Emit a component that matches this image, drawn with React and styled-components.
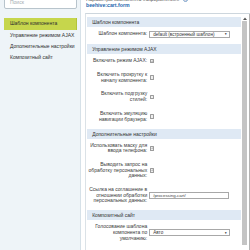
import React from 'react';
import styled, { createGlobalStyle } from 'styled-components';

const Global = createGlobalStyle`
  html, body { margin: 0; padding: 0; background: #fff; }
  body {
    font-family: "Liberation Sans", Arial, sans-serif;
    font-size: 5px;
    color: #333;
    overflow: hidden;
  }
`;

const Page = styled.div`
  display: grid;
  grid-template-columns: 81px 1fr;
  height: 250px;
  overflow: hidden;
`;

const Sidebar = styled.aside`
  background: #eef4f8;
  border-right: 1px solid #d6e1e8;
  padding: 0 3px 0 4px;
`;

const Search = styled.div`
  margin-top: -3px;
  height: 12.3px;
  box-sizing: border-box;
  border: 0.8px solid #b8c4cc;
  border-radius: 2px;
  background: #fff;
  color: #a3abb0;
  padding: 2.2px 0 0 5px;
  line-height: 5px;
`;

const Nav = styled.nav`
  margin-top: 9px;
  display: flex;
  flex-direction: column;
`;

const NavItem = styled.div`
  height: 11.3px;
  line-height: 11.3px;
  padding-left: 6px;
  box-sizing: border-box;
  color: #2f2f2f;
  background: ${p => (p.$active ? '#c6d64c' : 'transparent')};
  border-right: ${p => (p.$active ? '1px solid #b2c43a' : '0')};
`;

const Main = styled.main`
  display: flex;
  flex-direction: column;
  padding-left: 4px;
  min-width: 0;
`;

const TitleRow = styled.div`
  margin-top: -3px;
  padding-left: 1px;
  display: flex;
  align-items: center;
  gap: 4px;
  height: 5px;
  line-height: 5px;
  color: #555;
  white-space: nowrap;
`;

const Help = styled.span`
  width: 5px;
  height: 5px;
  border-radius: 50%;
  border: 0.6px solid #7aa0c8;
  box-sizing: border-box;
  color: #4a78a8;
  font-size: 3.5px;
  line-height: 4px;
  text-align: center;
  font-weight: bold;
`;

const Code = styled.div`
  padding-left: 1px;
  margin-top: 0.5px;
  height: 5px;
  line-height: 5px;
  color: #2366ad;
  font-weight: bold;
  font-size: 5.2px;
`;

const Panel = styled.div`
  margin-top: 5.2px;
  flex: 1;
  display: flex;
  border-top: 0.8px solid #cdd6dd;
  border-left: 0.8px solid #dbe2e7;
  min-height: 0;
`;

const Content = styled.div`
  flex: 1;
  padding: 3px 0 0 1.2px;
  min-width: 0;
`;

const Section = styled.section`
  & + & { margin-top: 2.3px; }
`;

const SectionTitle = styled.div`
  height: 10px;
  line-height: 10px;
  background: #dfe9f4;
  padding-left: 5px;
  color: #333;
`;

const Row = styled.div`
  display: grid;
  grid-template-columns: 60px 1fr;
  column-gap: 2px;
  align-items: center;
  padding: 4px 0;
`;

const Label = styled.div`
  text-align: right;
  line-height: 5.7px;
  white-space: nowrap;
  color: #3a3a3a;
`;

const Box = styled.span`
  display: inline-flex;
  align-items: center;
  justify-content: center;
  width: 4.6px;
  height: 4.6px;
  box-sizing: border-box;
  border: 0.6px solid #9c9c9c;
  border-radius: 0.6px;
  background: #eeeeee;
  margin-left: 0.5px;
`;

const Select = styled.div`
  width: 81px;
  height: 7px;
  box-sizing: border-box;
  border: 0.7px solid #a8a8a8;
  background: #fff;
  display: flex;
  align-items: center;
  justify-content: space-between;
  padding: 0 2px 0 3px;
  font-size: 4.6px;
  color: #333;
`;

const Arrow = styled.span`
  font-size: 3px;
  color: #222;
`;

const Input = styled.div`
  width: 80px;
  height: 7px;
  box-sizing: border-box;
  border: 0.7px solid #a8a8a8;
  background: #fff;
  display: flex;
  align-items: center;
  padding-left: 3px;
  font-size: 4.4px;
  color: #444;
`;

const Scrollbar = styled.div`
  width: 8px;
  display: flex;
  flex-direction: column;
  align-items: flex-start;
  border-right: 0.8px solid #b3b3b3;
  padding-top: 3px;
`;

const Thumb = styled.div`
  margin: 1.5px 0 5px 1px;
  width: 5px;
  flex: 1;
  background: #c4c4c4;
  border-radius: 0.5px;
`;

const UpArrow = styled.svg`
  margin-left: 2px;
  display: block;
`;

const Check = ({ checked }) => (
  <Box>
    {checked && (
      <svg width="4" height="4" viewBox="0 0 10 10">
        <path d="M2 5.2 L4.2 7.4 L8.2 2.6" fill="none" stroke="#444" strokeWidth="1.6" />
      </svg>
    )}
  </Box>
);

const Lines = ({ lines }) => (
  <Label>
    {lines.map((l, i) => (
      <div key={i}>{l}</div>
    ))}
  </Label>
);

const sections = [
  {
    title: 'Шаблон компонента',
    rows: [{ lines: ['Шаблон компонента:'], type: 'select', value: 'default (встроенный шаблон)' }],
  },
  {
    title: 'Управление режимом AJAX',
    rows: [
      { lines: ['Включить режим AJAX:'], type: 'check', checked: true },
      { lines: ['Включить прокрутку к', 'началу компонента:'], type: 'check' },
      { lines: ['Включить подгрузку', 'стилей:'], type: 'check' },
      { lines: ['Включить эмуляцию', 'навигации браузера:'], type: 'check' },
    ],
  },
  {
    title: 'Дополнительные настройки',
    rows: [
      { lines: ['Использовать маску для', 'ввода телефона:'], type: 'check', checked: true },
      { lines: ['Выводить запрос на', 'обработку персональных', 'данных:'], type: 'check', checked: true },
      { lines: ['Ссылка на соглашение в', 'отношении обработки', 'персональных данных:'], type: 'input', value: '/processing-cart/' },
    ],
  },
  {
    title: 'Композитный сайт',
    rows: [{ lines: ['Голосование шаблона', 'компонента по', 'умолчанию:'], type: 'select', value: 'Авто' }],
  },
];

const Control = ({ row }) => {
  if (row.type === 'check') return <Check checked={row.checked} />;
  if (row.type === 'input') return <Input>{row.value}</Input>;
  return (
    <Select>
      <span>{row.value}</span>
      <Arrow>▼</Arrow>
    </Select>
  );
};

export default function App() {
  return (
    <>
      <Global />
      <Page>
        <Sidebar>
          <Search>Поиск</Search>
          <Nav>
            <NavItem $active>Шаблон компонента</NavItem>
            <NavItem>Управление режимом AJAX</NavItem>
            <NavItem>Дополнительные настройки</NavItem>
            <NavItem>Композитный сайт</NavItem>
          </Nav>
        </Sidebar>
        <Main>
          <TitleRow>
            <span>Параметры компонента «Оформление»</span>
            <Help>?</Help>
          </TitleRow>
          <Code>beehive:cart.form</Code>
          <Panel>
            <Content>
              {sections.map(s => (
                <Section key={s.title}>
                  <SectionTitle>{s.title}</SectionTitle>
                  {s.rows.map((r, i) => (
                    <Row key={i}>
                      <Lines lines={r.lines} />
                      <div>
                        <Control row={r} />
                      </div>
                    </Row>
                  ))}
                </Section>
              ))}
            </Content>
            <Scrollbar>
              <UpArrow width="4" height="3" viewBox="0 0 4 3">
                <path d="M0 3 L2 0.5 L4 3 Z" fill="#555" />
              </UpArrow>
              <Thumb />
            </Scrollbar>
          </Panel>
        </Main>
      </Page>
    </>
  );
}
